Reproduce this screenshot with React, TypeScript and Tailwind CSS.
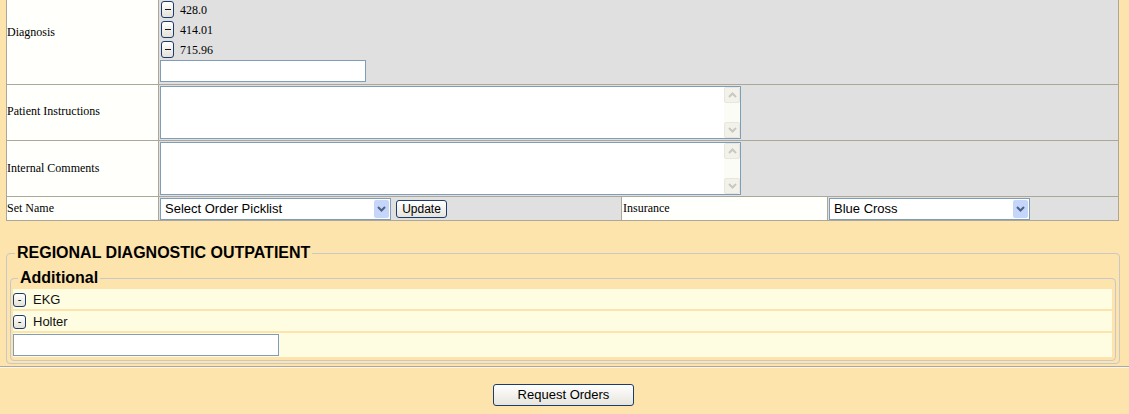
import React from "react";

const diagnoses = ["428.0", "414.01", "715.96"];
const additional = ["EKG", "Holter"];

const DxMinus = () => (
  <button
    type="button"
    className="ml-[1px] mt-[1px] flex h-[17px] w-[13px] items-center justify-center rounded-[3px] border border-[#1d3c6e] bg-gradient-to-b from-white to-[#e4e2d8]"
  >
    <span className="block h-[1px] w-[6px] bg-[#1a1a1a]" />
  </button>
);

const SmallMinus = () => (
  <button
    type="button"
    className="flex h-[14px] w-[13px] items-center justify-center rounded-[3px] border border-[#1d3c6e] bg-gradient-to-b from-white to-[#e4e2d8] text-[11px] leading-none text-black"
  >
    -
  </button>
);

const Chevron = ({ up, color }: { up?: boolean; color: string }) => (
  <svg width="9" height="6" viewBox="0 0 9 6">
    <path
      d={up ? "M1 5 L4.5 1.5 L8 5" : "M1 1 L4.5 4.5 L8 1"}
      fill="none"
      stroke={color}
      strokeWidth="2"
    />
  </svg>
);

const TextBox = () => (
  <div className="flex h-[53px] w-[581px] border border-[#7f9db9] bg-white">
    <textarea className="flex-1 resize-none bg-white outline-none" />
    <div className="flex w-[16px] flex-col justify-between bg-[#fcfcf7]">
      <div className="flex h-[16px] items-center justify-center rounded-[2px] border border-[#e8e7de] bg-[#f3f2ea]">
        <Chevron up color="#c8c8c0" />
      </div>
      <div className="flex h-[16px] items-center justify-center rounded-[2px] border border-[#e8e7de] bg-[#f3f2ea]">
        <Chevron color="#c8c8c0" />
      </div>
    </div>
  </div>
);

const Dropdown = ({ value, width }: { value: string; width: string }) => (
  <div className={`flex h-[22px] ${width} border border-[#7f9db9] bg-white`}>
    <select className="flex-1 appearance-none bg-white pl-[4px] font-['Liberation_Sans',Arial,sans-serif] text-[13px] text-black outline-none">
      <option>{value}</option>
    </select>
    <div className="m-[1px] flex w-[15px] items-center justify-center rounded-[2px] bg-[#c6d5fa]">
      <Chevron color="#4d6185" />
    </div>
  </div>
);

export default function App() {
  return (
    <div className="min-h-screen bg-[#fde3ac] font-['Liberation_Serif',serif] text-[12px] text-black">
      {/* Order table */}
      <div className="ml-[6px] w-[1113px] border-x border-[#aca899]">
        {/* Diagnosis */}
        <div className="flex border-b border-[#aca899]">
          <div className="flex w-[152px] items-center border-r border-[#aca899] bg-[#fffffb] pb-[21px]">
            Diagnosis
          </div>
          <div className="flex-1 bg-[#e0e0e0] pb-[2px] pl-[1px]">
            {diagnoses.map((code) => (
              <div key={code} className="flex h-[20px] items-start gap-[6px]">
                <DxMinus />
                <span className="leading-[21px]">{code}</span>
              </div>
            ))}
            <input className="block h-[22px] w-[206px] border border-[#7f9db9] bg-white outline-none" />
          </div>
        </div>

        {/* Patient Instructions */}
        <div className="flex border-b border-[#aca899]">
          <div className="flex w-[152px] items-center border-r border-[#aca899] bg-[#fffffb] pb-[3px]">
            Patient Instructions
          </div>
          <div className="flex-1 bg-[#e0e0e0] py-[1px] pl-[1px]">
            <TextBox />
          </div>
        </div>

        {/* Internal Comments */}
        <div className="flex border-b border-[#aca899]">
          <div className="flex w-[152px] items-center border-r border-[#aca899] bg-[#fffffb] pb-[2px]">
            Internal Comments
          </div>
          <div className="flex-1 bg-[#e0e0e0] py-[1px] pl-[1px]">
            <TextBox />
          </div>
        </div>

        {/* Set Name / Insurance */}
        <div className="flex h-[24px] border-b border-[#aca899]">
          <div className="flex w-[152px] items-center border-r border-[#aca899] bg-[#fffffb] pb-[2px]">
            Set Name
          </div>
          <div className="flex w-[463px] items-center gap-[5px] border-r border-[#aca899] bg-[#e0e0e0] pl-[1px]">
            <Dropdown value="Select Order Picklist" width="w-[231px]" />
            <button
              type="button"
              className="h-[18px] w-[51px] rounded-[3px] border border-[#1d3c6e] bg-gradient-to-b from-white to-[#e6e4dc] font-['Liberation_Sans',Arial,sans-serif] text-[12px] leading-none text-black"
            >
              Update
            </button>
          </div>
          <div className="flex w-[206px] items-center border-r border-[#aca899] bg-[#fffffb] pb-[2px] pl-[1px]">
            Insurance
          </div>
          <div className="flex flex-1 items-center bg-[#e0e0e0] pl-[1px]">
            <Dropdown value="Blue Cross" width="w-[201px]" />
          </div>
        </div>
      </div>

      {/* Regional diagnostic outpatient */}
      <fieldset className="ml-[6px] mt-[23px] w-[1114px] rounded-[4px] border border-[#c8c8c8] pb-[2px] pl-[3px] pr-[3px] pt-[7px] font-['Liberation_Sans',Arial,sans-serif]">
        <legend className="ml-[5px] px-[2px] text-[16px] font-bold leading-[18px]">
          REGIONAL DIAGNOSTIC OUTPATIENT
        </legend>
        <fieldset className="rounded-[4px] border border-[#c8c8c8] pb-[3px] pl-[2px] pr-[3px] pt-[2px]">
          <legend className="ml-[5px] px-[2px] text-[16px] font-bold leading-[18px]">
            Additional
          </legend>
          <div className="flex flex-col gap-[2px]">
            {additional.map((item) => (
              <div
                key={item}
                className="flex h-[20px] items-center gap-[7px] bg-[#fffde1] pt-[1px] text-[13px] text-[#111]"
              >
                <SmallMinus />
                <span>{item}</span>
              </div>
            ))}
            <div className="h-[24px] bg-[#fffde1] pt-[1px]">
              <input className="block h-[22px] w-[266px] border border-[#7f9db9] bg-white outline-none" />
            </div>
          </div>
        </fieldset>
      </fieldset>

      <div className="mt-[2px] border-b border-t border-b-[#fff4dc] border-t-[#a8a8a8]" />

      <div className="flex justify-center pt-[16px]">
        <button
          type="button"
          className="-ml-[2px] h-[22px] w-[141px] rounded-[3px] border border-[#1d3c6e] bg-gradient-to-b from-white to-[#e6e4dc] font-['Liberation_Sans',Arial,sans-serif] text-[13px] text-black"
        >
          Request Orders
        </button>
      </div>
    </div>
  );
}
